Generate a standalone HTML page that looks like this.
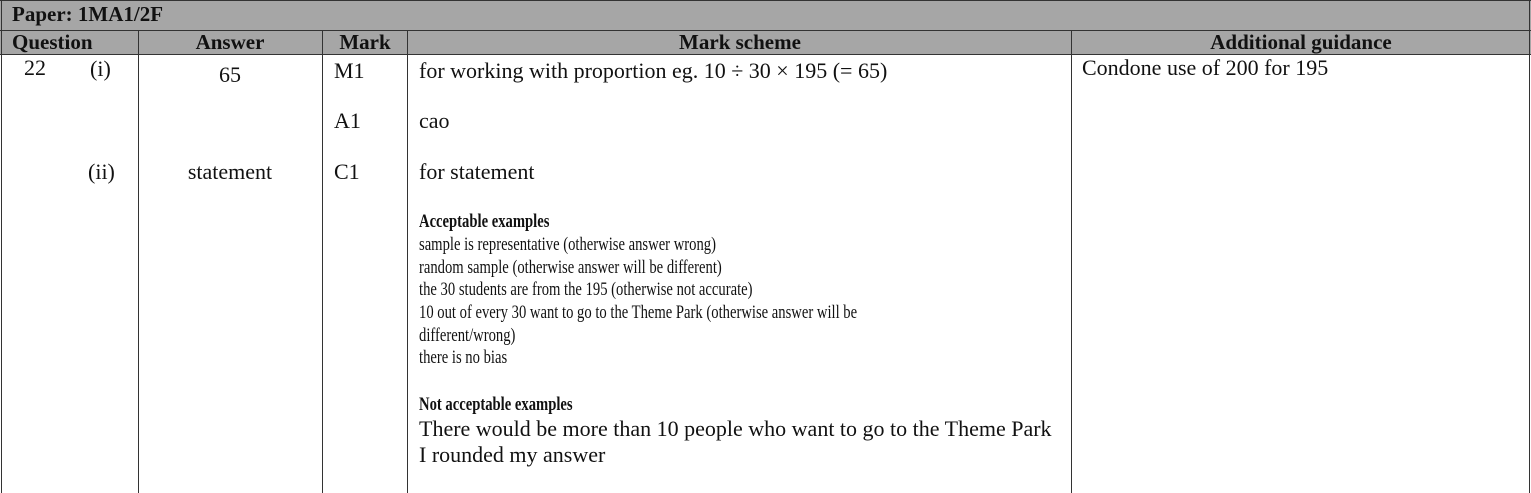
<!DOCTYPE html>
<html><head><style>
body{margin:0;width:1531px;height:493px;position:relative;background:#fff;overflow:hidden;font-family:"Liberation Serif",serif;color:#111}
.v{position:absolute;top:0;bottom:0;width:1px;background:#333}
.h{position:absolute;left:0;width:1531px;height:1px;background:#333}
.t{position:absolute;white-space:nowrap;line-height:1}
.b{font-weight:bold}
.hd{font-size:21px;font-weight:bold}
.c{transform:translateX(-50%)}
.s{font-size:19px;transform-origin:0 0;transform:scaleX(0.77)}
.m{font-size:22px}
</style></head><body>
<div style="position:absolute;left:0;top:0;width:1531px;height:54px;background:#a6a6a6"></div>
<div class="h" style="top:0"></div>
<div class="h" style="top:30px"></div>
<div class="h" style="top:54px"></div>
<div class="v" style="left:1px"></div>
<div class="v" style="left:1529px"></div>
<div class="v" style="left:138px;top:31px"></div>
<div class="v" style="left:322px;top:31px"></div>
<div class="v" style="left:407px;top:31px"></div>
<div class="v" style="left:1071px;top:31px"></div>

<div class="t hd" style="left:12px;top:4px">Paper: 1MA1/2F</div>
<div class="t hd" style="left:12px;top:32px">Question</div>
<div class="t hd c" style="left:230px;top:32px">Answer</div>
<div class="t hd c" style="left:365px;top:32px">Mark</div>
<div class="t hd c" style="left:740px;top:32px">Mark scheme</div>
<div class="t hd c" style="left:1301px;top:32px">Additional guidance</div>

<div class="t m" style="left:24px;top:57px">22</div>
<div class="t m" style="left:90px;top:58px">(i)</div>
<div class="t m c" style="left:230px;top:64px">65</div>
<div class="t m" style="left:334px;top:60px">M1</div>
<div class="t m" style="left:419px;top:60px">for working with proportion eg. 10 ÷ 30 × 195 (= 65)</div>
<div class="t m" style="left:1082px;top:57px">Condone use of 200 for 195</div>
<div class="t m" style="left:334px;top:110px">A1</div>
<div class="t m" style="left:419px;top:110px">cao</div>
<div class="t m" style="left:88px;top:161px">(ii)</div>
<div class="t m c" style="left:230px;top:161px">statement</div>
<div class="t m" style="left:334px;top:161px">C1</div>
<div class="t m" style="left:419px;top:161px">for statement</div>

<div class="t s b" style="left:419px;top:212px">Acceptable examples</div>
<div class="t s" style="left:419px;top:235px">sample is representative (otherwise answer wrong)</div>
<div class="t s" style="left:419px;top:258px">random sample (otherwise answer will be different)</div>
<div class="t s" style="left:419px;top:280px">the 30 students are from the 195 (otherwise not accurate)</div>
<div class="t s" style="left:419px;top:303px">10 out of every 30 want to go to the Theme Park (otherwise answer will be</div>
<div class="t s" style="left:419px;top:326px">different/wrong)</div>
<div class="t s" style="left:419px;top:348px">there is no bias</div>
<div class="t s b" style="left:419px;top:395px">Not acceptable examples</div>
<div class="t m" style="left:419px;top:418px">There would be more than 10 people who want to go to the Theme Park</div>
<div class="t m" style="left:419px;top:444px">I rounded my answer</div>
</body></html>
